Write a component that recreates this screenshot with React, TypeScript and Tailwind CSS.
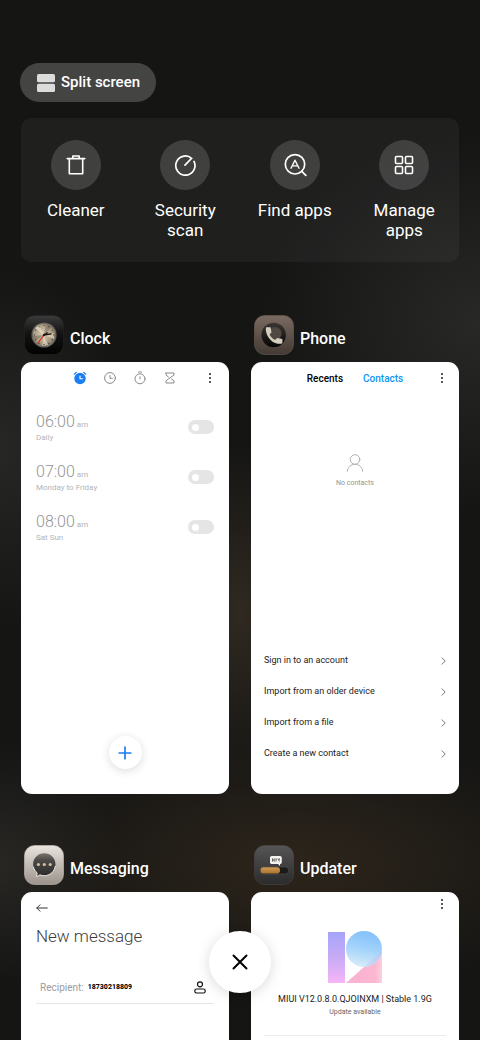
import type { ReactNode } from "react";

const quickActions = [
  { label: "Cleaner", icon: <TrashIcon /> },
  { label: "Security scan", icon: <ScanIcon /> },
  { label: "Find apps", icon: <FindIcon /> },
  { label: "Manage apps", icon: <GridIcon /> },
];

const alarms = [
  { id: "alarm-6", time: "06:00", period: "am", days: "Daily" },
  { id: "alarm-7", time: "07:00", period: "am", days: "Monday to Friday" },
  { id: "alarm-8", time: "08:00", period: "am", days: "Sat Sun" },
];

const contactActions = [
  "Sign in to an account",
  "Import from an older device",
  "Import from a file",
  "Create a new contact",
];

/* Toolbar icons */

function TrashIcon() {
  return (
    <svg width="22" height="22" viewBox="0 0 22 22" fill="none" stroke="white" strokeWidth="1.6" strokeLinejoin="round" strokeLinecap="round">
      <path d="M2.200 4.600h17.600M4.300 4.600v15.200h13.400V4.600M7.800 4.400V2h6.400v2.400" />
    </svg>
  );
}

function ScanIcon() {
  return (
    <svg width="22" height="22" viewBox="0 0 22 22" fill="none" stroke="white" strokeWidth="1.7" strokeLinecap="round">
      <path d="M11 11.200 17.600 4.300A9.600 9.600 0 1 0 20 7.400" />
    </svg>
  );
}

function FindIcon() {
  return (
    <svg width="24" height="24" viewBox="0 0 24 24" fill="none" stroke="white" strokeWidth="1.7" strokeLinecap="round" strokeLinejoin="round">
      <circle cx="12" cy="11.3" r="9.7" />
      <path d="M18.8 18.4l4 4" />
      <path d="M8 15.2 12 7.2l4 8M9.3 12.9h5.4" strokeWidth="1.4" />
    </svg>
  );
}

function GridIcon() {
  return (
    <svg width="20" height="20" viewBox="0 0 20 20" fill="none" stroke="white" strokeWidth="1.6">
      <rect x="1.5" y="1.5" width="7" height="7" rx="1" />
      <rect x="11.5" y="1.5" width="7" height="7" rx="1" />
      <rect x="1.5" y="11.5" width="7" height="7" rx="1" />
      <rect x="11.5" y="11.5" width="7" height="7" rx="1" />
    </svg>
  );
}

/* Launcher icons */

function ClockAppIcon() {
  const ticks = Array.from({ length: 12 }, (_, i) => i * 30);
  return (
    <svg width="40" height="40" viewBox="0 0 40 40">
      <defs>
        <linearGradient id="clockTile" x1="0" y1="0" x2="0" y2="1">
          <stop offset="0" stopColor="#3b3b3b" />
          <stop offset="0.45" stopColor="#141414" />
          <stop offset="1" stopColor="#020202" />
        </linearGradient>
        <radialGradient id="clockFace" cx="0.45" cy="0.45" r="0.6">
          <stop offset="0" stopColor="#d8cdb6" />
          <stop offset="0.6" stopColor="#b0a188" />
          <stop offset="1" stopColor="#7a6f5f" />
        </radialGradient>
      </defs>
      <rect x="0.5" y="0.5" width="39" height="39" rx="10" fill="url(#clockTile)" stroke="#242424" strokeWidth="0.6" />
      <circle cx="20" cy="20" r="12.600" fill="#66625d" />
      <circle cx="20" cy="20" r="11.200" fill="url(#clockFace)" />
      <path d="M20 20 15 10l-4 3zM20 20l10-2v6zM20 20l-2 11 6-1z" fill="#efe6d2" opacity="0.55" />
      <path d="M20 20l2-11 6 3zM20 20 9 21l2 5z" fill="#4f483d" opacity="0.35" />
      {ticks.map((deg) => (
        <path key={deg} d="M20 9.800v1.200" stroke="#2b2722" strokeWidth="0.8" transform={`rotate(${deg} 20 20)`} />
      ))}
      <path d="M20 20l7.500-1.200M20 20l3.600-2.500" stroke="#15130f" strokeWidth="1.300" />
      <path d="M21.500 18 13.500 28.500" stroke="#d02b20" strokeWidth="1.200" />
      <circle cx="20" cy="20" r="1.200" fill="#1a1815" />
    </svg>
  );
}

function PhoneAppIcon() {
  return (
    <svg width="40" height="40" viewBox="0 0 40 40">
      <defs>
        <linearGradient id="phoneTile" x1="0" y1="0" x2="0" y2="1">
          <stop offset="0" stopColor="#7a6b61" />
          <stop offset="1" stopColor="#433a33" />
        </linearGradient>
        <linearGradient id="phoneDial" x1="0" y1="0" x2="0" y2="1">
          <stop offset="0" stopColor="#3a3633" />
          <stop offset="1" stopColor="#060606" />
        </linearGradient>
        <pattern id="phoneMesh" width="2" height="2" patternUnits="userSpaceOnUse">
          <rect width="2" height="2" fill="#5a5149" />
          <circle cx="1" cy="1" r="0.6" fill="#2b2622" />
        </pattern>
      </defs>
      <rect x="0.5" y="0.5" width="39" height="39" rx="10" fill="url(#phoneTile)" stroke="#6b5f56" strokeWidth="0.6" />
      <circle cx="19.7" cy="20" r="12.2" fill="url(#phoneDial)" />
      <circle cx="21" cy="18.6" r="6.6" fill="url(#phoneMesh)" />
      <path
        d="M12 12.300h4.600l.9 5.200-2 1.900c1.400 2.400 3.100 4.100 5.500 5.500l2.200-2 5.200 1v4.400c-2.800 1-6.500.6-10.200-1.900C13.200 22.500 11.200 16.600 12 12.300z"
        fill="#d5cdbf"
      />
    </svg>
  );
}

function MessagingAppIcon() {
  return (
    <svg width="40" height="40" viewBox="0 0 40 40">
      <defs>
        <linearGradient id="smsTile" x1="0" y1="0" x2="0" y2="1">
          <stop offset="0" stopColor="#e9e4df" />
          <stop offset="1" stopColor="#9c938b" />
        </linearGradient>
        <linearGradient id="smsBubble" x1="0" y1="0" x2="0" y2="1">
          <stop offset="0" stopColor="#77736f" />
          <stop offset="0.3" stopColor="#4c4a48" />
          <stop offset="1" stopColor="#2d2b2a" />
        </linearGradient>
      </defs>
      <rect x="0.5" y="0.5" width="39" height="39" rx="10" fill="url(#smsTile)" stroke="#c9c2bb" strokeWidth="0.6" />
      <path
        d="M20.300 8.300c6.300 0 11.200 4.900 11.200 11 0 6.300-4.900 11.400-11.200 11.400-1.500 0-3-.3-4.400-.9-1 .9-2.300 1.500-3.900 1.600.9-1.100 1.300-2.300 1.100-3.600-2.500-2.100-4-5.100-4-8.500 0-6.100 5-11 11.200-11z"
        fill="url(#smsBubble)"
      />
      <path d="M31.300 21c-.8 5.500-5.300 9.700-11 9.700-1.500 0-3-.3-4.400-.9-1 .9-2.300 1.500-3.900 1.600.9-1.100 1.300-2.300 1.100-3.600-1.900-1.600-3.200-3.600-3.700-6" fill="none" stroke="#f4f0ea" strokeWidth="0.9" />
      <circle cx="14.400" cy="19.500" r="1.600" fill="#d3bf9c" />
      <circle cx="20.300" cy="19.500" r="1.600" fill="#d3bf9c" />
      <circle cx="26.200" cy="19.500" r="1.600" fill="#d3bf9c" />
    </svg>
  );
}

function UpdaterAppIcon() {
  return (
    <svg width="40" height="40" viewBox="0 0 40 40">
      <defs>
        <linearGradient id="updTile" x1="0" y1="0" x2="0" y2="1">
          <stop offset="0" stopColor="#555555" />
          <stop offset="1" stopColor="#2b2b2b" />
        </linearGradient>
        <linearGradient id="updBar" x1="0" y1="0" x2="0" y2="1">
          <stop offset="0" stopColor="#d09a52" />
          <stop offset="1" stopColor="#a9742f" />
        </linearGradient>
      </defs>
      <rect x="0.5" y="0.5" width="39" height="39" rx="10" fill="url(#updTile)" stroke="#484848" strokeWidth="0.6" />
      <rect x="6" y="22" width="28.500" height="7" rx="3" fill="#1d1b1a" stroke="#5c5a58" strokeWidth="0.5" />
      <rect x="6.500" y="22.300" width="19.500" height="6.200" rx="3" fill="url(#updBar)" />
      <path d="M17.800 11h8.200c1 0 1.800.8 1.800 1.800v4.400c0 1-.8 1.800-1.800 1.800v2l-2-2h-6.200c-1 0-1.800-.8-1.800-1.800v-4.400c0-1 .8-1.800 1.800-1.800z" fill="#f4f2ef" />
      <path d="M18.500 13.400v3.200M20.200 13.400v3.200M18.500 15h1.700M22 16.600v-3l1 1.200M24 13.500l1.500 3M25.500 13.400v1.400" stroke="#4a4845" strokeWidth="0.800" fill="none" />
    </svg>
  );
}

/* Small icons used inside the cards */

function MoreButton() {
  return (
    <button type="button" aria-label="More options" className="flex size-4 items-center justify-center justify-self-end">
      <svg width="4" height="12" viewBox="0 0 4 12" fill="#222">
        <circle cx="2" cy="2" r="1" />
        <circle cx="2" cy="6" r="1" />
        <circle cx="2" cy="10" r="1" />
      </svg>
    </button>
  );
}

function AlarmTabIcon() {
  return (
    <svg width="14" height="14" viewBox="0 0 14 14" fill="none" strokeLinecap="round">
      <circle cx="7" cy="7.500" r="5.700" fill="#1c7df2" />
      <path d="M1.200 3.200 3.300 1.400M12.800 3.200 10.700 1.400" stroke="#1c7df2" strokeWidth="1.200" />
      <path d="M7 5v2.700h2.400" stroke="white" strokeWidth="1.100" />
    </svg>
  );
}

function WorldClockTabIcon() {
  return (
    <svg width="14" height="14" viewBox="0 0 14 14" fill="none" stroke="#8a8a8a" strokeLinecap="round">
      <circle cx="7" cy="7" r="5.400" />
      <path d="M7 4.500v2.800h2.400" />
    </svg>
  );
}

function StopwatchTabIcon() {
  return (
    <svg width="14" height="14" viewBox="0 0 14 14" fill="none" stroke="#8a8a8a" strokeLinecap="round">
      <circle cx="7" cy="7.800" r="5" />
      <path d="M5.500 1h3M7 5.800v2.200" />
    </svg>
  );
}

function TimerTabIcon() {
  return (
    <svg width="14" height="14" viewBox="0 0 14 14" fill="none" stroke="#8a8a8a" strokeLinecap="round" strokeLinejoin="round">
      <path d="M3 2h8v2L3 9.800V12h8V9.800L8.500 8M5.500 6 3 4V2" />
    </svg>
  );
}

function MiuiLogo() {
  return (
    <svg width="54" height="52" viewBox="0 0 54 52">
      <defs>
        <linearGradient id="logoBar" x1="0" y1="0" x2="0" y2="1">
          <stop offset="0" stopColor="#a5a5fb" />
          <stop offset="0.500" stopColor="#c8abf5" />
          <stop offset="1" stopColor="#f6b5f8" />
        </linearGradient>
        <linearGradient id="logoBall" x1="0.600" y1="0" x2="0.400" y2="1">
          <stop offset="0" stopColor="#83c0fb" />
          <stop offset="0.500" stopColor="#a3d3fb" />
          <stop offset="1" stopColor="#d7ecf8" />
        </linearGradient>
        <linearGradient id="logoFoot" x1="0" y1="0" x2="1" y2="0">
          <stop offset="0" stopColor="#f8b2d4" />
          <stop offset="0.800" stopColor="#fbb6cf" />
          <stop offset="1" stopColor="#fdd0df" />
        </linearGradient>
        <clipPath id="logoFootClip">
          <path d="M18 52 54 20v32z" />
        </clipPath>
      </defs>
      <rect x="0" y="1" width="17" height="51" fill="url(#logoBar)" />
      <path d="M18 52 54 20v32z" fill="url(#logoFoot)" />
      <circle cx="36" cy="18" r="18" fill="url(#logoBall)" />
      <circle cx="36" cy="18" r="18" fill="#c9b8ec" opacity="0.350" clipPath="url(#logoFootClip)" />
    </svg>
  );
}

type AppWindowProps = {
  title: string;
  icon: ReactNode;
  children: ReactNode;
};

function AppWindow({ title, icon, children }: AppWindowProps) {
  return (
    <section>
      <header className="flex items-end gap-[6px] pl-[3px]">
        {icon}
        <h2 className="pb-1 text-[16px] leading-6 font-medium text-white">{title}</h2>
      </header>
      <div className="mt-[7px] flex min-h-[432px] flex-col rounded-[11px] bg-white text-black">
        {children}
      </div>
    </section>
  );
}

function ClockWindow() {
  return (
    <AppWindow title="Clock" icon={<ClockAppIcon />}>
      <nav className="grid h-8 grid-cols-[1fr_auto_1fr] items-center px-[11px]">
        <span />
        <div className="flex gap-4">
          <button type="button" aria-label="Alarm"><AlarmTabIcon /></button>
          <button type="button" aria-label="World clock"><WorldClockTabIcon /></button>
          <button type="button" aria-label="Stopwatch"><StopwatchTabIcon /></button>
          <button type="button" aria-label="Timer"><TimerTabIcon /></button>
        </div>
        <MoreButton />
      </nav>
      <ul className="mt-2 px-[15px]">
        {alarms.map((alarm) => (
          <li key={alarm.id} className="flex h-[50px] items-center justify-between">
            <label htmlFor={alarm.id} className="text-[#b4b4b4]">
              <span className="block text-[16px] leading-[18px] font-light text-[#949494]">
                {alarm.time}
                <span className="ml-[2px] text-[8px] font-normal text-[#b4b4b4]">{alarm.period}</span>
              </span>
              <span className="block text-[8px] leading-[8px]">{alarm.days}</span>
            </label>
            <input
              id={alarm.id}
              type="checkbox"
              className="flex h-[14px] w-[26px] appearance-none items-center rounded-full bg-[#e5e5e5] px-1 before:block before:size-[7px] before:rounded-full before:bg-white checked:bg-[#1c7df2] checked:before:ml-3"
            />
          </li>
        ))}
      </ul>
      <button
        type="button"
        aria-label="Add alarm"
        className="mx-auto mt-auto mb-[25px] flex size-[33px] items-center justify-center rounded-full bg-white shadow-[0_2px_10px_rgba(0,0,0,0.14)]"
      >
        <svg width="14" height="14" viewBox="0 0 14 14" stroke="#1c7df2" strokeWidth="1.700" strokeLinecap="round">
          <path d="M7 1.200v11.600M1.200 7h11.600" />
        </svg>
      </button>
    </AppWindow>
  );
}

function PhoneWindow() {
  return (
    <AppWindow title="Phone" icon={<PhoneAppIcon />}>
      <nav className="grid h-8 grid-cols-[1fr_auto_1fr] items-center px-[9px]">
        <span />
        <div className="flex gap-5 text-[10px] font-medium">
          <button type="button">Recents</button>
          <button type="button" className="text-[#0d95f5]">Contacts</button>
        </div>
        <MoreButton />
      </nav>
      <div className="mt-[60px] flex flex-col items-center gap-[6px]">
        <svg width="18" height="18" viewBox="0 0 18 18" fill="none" stroke="#b0b0b0" strokeLinecap="round">
          <circle cx="9" cy="5.500" r="4.800" />
          <path d="M1.300 17.300c.5-4.300 3.600-7 7.700-7s7.200 2.700 7.700 7" />
        </svg>
        <p className="text-[7px] leading-[10px] text-[#949494]">No contacts</p>
      </div>
      <ul className="mt-auto mb-[25px] px-[13px]">
        {contactActions.map((action) => (
          <li key={action}>
            <button type="button" className="flex h-[31px] w-full items-center justify-between text-left text-[9px] text-[#1c1c1c]">
              {action}
              <svg width="5" height="8" viewBox="0 0 5 8" fill="none" stroke="#777" strokeLinecap="round" strokeLinejoin="round">
                <path d="M1 .8 4.200 4 1 7.200" />
              </svg>
            </button>
          </li>
        ))}
      </ul>
    </AppWindow>
  );
}

function MessagingWindow() {
  return (
    <AppWindow title="Messaging" icon={<MessagingAppIcon />}>
      <div className="px-[15px]">
        <button type="button" aria-label="Back" className="flex h-8 items-center">
          <svg width="12" height="8" viewBox="0 0 12 8" fill="none" stroke="#333" strokeLinecap="round" strokeLinejoin="round">
            <path d="M11.300 4H.8M4 .8.800 4 4 7.200" />
          </svg>
        </button>
        <h3 className="text-[17px] leading-6 font-light text-[#3c3c3c]">New message</h3>
        <div className="mt-6 flex h-8 items-center border-b border-[#e6e6e6] px-1">
          <label htmlFor="recipient" className="text-[10px] text-[#9c9c9c]">Recipient:</label>
          <input id="recipient" defaultValue="18730218809" className="ml-1 w-0 grow text-[7px] font-extrabold text-black outline-none" />
          <button type="button" aria-label="Choose contact" className="mr-1">
            <svg width="12" height="13" viewBox="0 0 12 13" fill="none" stroke="#111" strokeWidth="1.200">
              <circle cx="6" cy="3.300" r="2.500" />
              <rect x="0.800" y="8" width="10.400" height="4" rx="1.800" />
            </svg>
          </button>
        </div>
      </div>
    </AppWindow>
  );
}

function UpdaterWindow() {
  return (
    <AppWindow title="Updater" icon={<UpdaterAppIcon />}>
      <nav className="flex h-6 items-center justify-end px-[9px]">
        <MoreButton />
      </nav>
      <div className="mx-[13px] flex flex-col items-center border-b border-[#ececec] pt-[15px] pb-[18px]">
        <MiuiLogo />
        <p className="mt-[10px] text-[9px] leading-3 text-[#222]">MIUI V12.0.8.0.QJOINXM | Stable 1.9G</p>
        <p className="mt-[2px] text-[7px] leading-[10px] text-[#666]">Update available</p>
      </div>
    </AppWindow>
  );
}

export default function App() {
  return (
    <main className="relative h-screen overflow-hidden bg-[#151514] bg-[radial-gradient(ellipse_90px_170px_at_50%_59%,#2f2921,transparent),radial-gradient(ellipse_300px_130px_at_62%_83%,#2d251b,transparent),radial-gradient(ellipse_130px_180px_at_0%_43%,#272726,transparent),radial-gradient(ellipse_220px_190px_at_100%_31%,#282827,transparent),radial-gradient(ellipse_120px_120px_at_0%_83%,#282724,transparent)] px-[21px] pt-[63px] font-[Roboto,sans-serif]">
      <button type="button" className="-ml-px flex h-[39px] items-center gap-[6px] rounded-full bg-[#444443] pr-4 pl-[17px] text-[15px] font-medium text-white">
        <svg width="18" height="18" viewBox="0 0 18 18" fill="#dcdcdc">
          <rect width="18" height="8.200" rx="1.500" />
          <rect y="9.800" width="18" height="8.200" rx="1.500" />
        </svg>
        Split screen
      </button>

      <div className="mt-4 grid min-h-[144px] grid-cols-4 rounded-[10px] bg-white/[0.045] pt-[22px]">
        {quickActions.map((action) => (
          <button key={action.label} type="button" className="flex flex-col items-center text-white">
            <span className="flex size-[50px] items-center justify-center rounded-full bg-white/15">
              {action.icon}
            </span>
            <span className="mt-[10px] w-20 text-[17px] leading-5">{action.label}</span>
          </button>
        ))}
      </div>

      <div className="mt-[53px] grid grid-cols-2 gap-x-[22px] gap-y-[51px]">
        <ClockWindow />
        <PhoneWindow />
        <MessagingWindow />
        <UpdaterWindow />
      </div>

      {/* Clear all */}
      <button
        type="button"
        aria-label="Close all apps"
        className="absolute bottom-[47px] left-1/2 flex size-[62px] -translate-x-1/2 items-center justify-center rounded-full bg-white shadow-[0_2px_14px_rgba(0,0,0,0.15)]"
      >
        <svg width="16" height="16" viewBox="0 0 16 16" stroke="black" strokeWidth="2" strokeLinecap="round">
          <path d="M1.500 1.500l13 13M14.500 1.500l-13 13" />
        </svg>
      </button>
    </main>
  );
}
